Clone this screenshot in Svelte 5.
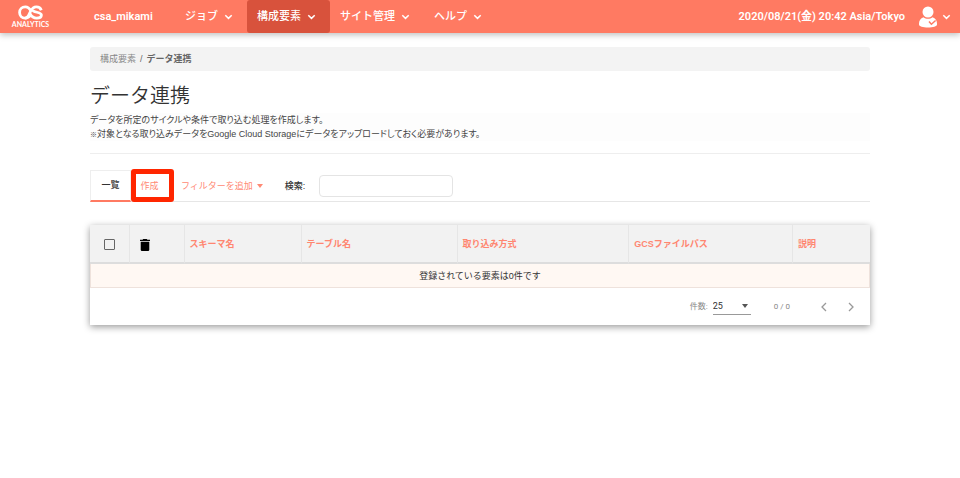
<script>
  const menus = [
    { label: 'ジョブ', active: false },
    { label: '構成要素', active: true },
    { label: 'サイト管理', active: false },
    { label: 'ヘルプ', active: false }
  ];
  const columns = ['スキーマ名', 'テーブル名', '取り込み方式', 'GCSファイルパス', '説明'];
  const widths = [5, 7, 15, 20, 22, 21, 10];
  let search = $state('');
  let pageSize = $state('25');
  let allSelected = $state(false);
</script>

{#snippet chevron()}
  <svg class="chevron" viewBox="0 0 9 6" aria-hidden="true">
    <path d="M1.3 1.2 4.5 4.4 7.7 1.2" />
  </svg>
{/snippet}

<header>
  <a class="logo" href="#top" aria-label="CS Analytics">
    <svg viewBox="0 0 25 15" aria-hidden="true">
      <path d="M23.300 5.200C22.500 3 20.700 1.900 18.300 1.900 15.400 1.900 14 3.600 12.500 6.300 10.900 9.600 10.300 13.100 7 13.100 4 13.100 1.600 10.600 1.600 7.500S4 1.900 7.300 1.900c3 0 4.300 1.600 5.700 4.200" />
      <path d="M14.700 4.800c.3 3 8.700 1.900 8.700 5.200 0 1.900-1.900 3.100-4.700 3.100-3.200 0-5.200-1.700-6.700-4.500" />
      <path d="M7 13.100c2.700 0 4.300-1.200 5.500-3.100" />
    </svg>
    <span>ANALYTICS</span>
  </a>
  <a class="account" href="#account">csa_mikami</a>
  <nav class="menus">
    {#each menus as menu}
      <button class="menu" class:active={menu.active}>{menu.label}{@render chevron()}</button>
    {/each}
  </nav>
  <time datetime="2020-08-21T20:42">2020/08/21(金) 20:42 Asia/Tokyo</time>
  <button class="user" aria-label="ユーザー">
    <svg class="person" viewBox="0 0 20 22" aria-hidden="true">
      <circle cx="10" cy="6" r="5.500" />
      <path d="M5.500 11.200C2.500 12.200 1 14.500 1 17.500v1C1 20.500 5 21.500 10 21.500s9-1 9-3v-1c0-3-1.500-5.300-4.500-6.300-2.500 2.100-6.500 2.100-9 0Z" />
      <path class="check" d="m11 15.500 2.400 2.700 4.200-3.700" />
    </svg>
    {@render chevron()}
  </button>
</header>

<main>
  <nav class="crumbs"><a href="#elements">構成要素</a><span>/</span><strong>データ連携</strong></nav>
  <h1>データ連携</h1>
  <p>データを所定のサイクルや条件で取り込む処理を作成します。<br /><small>※</small>対象となる取り込みデータをGoogle Cloud Storageにデータをアップロードしておく必要があります。</p>
  <hr />

  <div class="tools">
    <a class="tab current" href="#list">一覧</a>
    <a class="tab create" href="#create">作成</a>
    <button class="filter">フィルターを追加<span class="caret"></span></button>
    <label for="search">検索:</label>
    <input id="search" type="text" bind:value={search} />
  </div>

  <section class="card">
    <table>
      <colgroup>
        {#each widths as width}<col style="width: {width}%" />{/each}
      </colgroup>
      <thead>
        <tr>
          <th class="icon"><input type="checkbox" aria-label="すべて選択" bind:checked={allSelected} /></th>
          <th class="icon trash">
            <button aria-label="削除">
              <svg viewBox="0 0 10 12" aria-hidden="true"><path d="M3.200 0h3.600l.6.700H10V2H0V.700h2.600ZM.700 2.700h8.600V10.700Q9.300 12 8 12H2Q.700 12 .700 10.700Z" /></svg>
            </button>
          </th>
          {#each columns as column}<th>{column}</th>{/each}
        </tr>
      </thead>
      <tbody>
        <tr><td colspan="7">登録されている要素は0件です</td></tr>
      </tbody>
    </table>
    <footer>
      <label for="size">件数:</label>
      <span class="select">
        <select id="size" bind:value={pageSize}>
          <option>25</option>
          <option>50</option>
          <option>100</option>
        </select>
        <span class="caret"></span>
      </span>
      <span class="range">0 / 0</span>
      <button aria-label="前へ"><svg viewBox="0 0 6 10" aria-hidden="true"><path d="M5 1 1 5l4 4" /></svg></button>
      <button aria-label="次へ"><svg viewBox="0 0 6 10" aria-hidden="true"><path d="m1 1 4 4-4 4" /></svg></button>
    </footer>
  </section>
</main>

<style>
  :global(body) {
    background: #fff;
    color: #333;
    font: 9px/14px "Liberation Sans", "Noto Sans CJK JP", sans-serif;
  }
  * { box-sizing: border-box; }
  a { color: inherit; text-decoration: none; }
  button { border: 0; padding: 0; background: none; color: inherit; font: inherit; cursor: pointer; }

  header {
    display: flex;
    align-items: center;
    height: 33px;
    padding: 0 9px 0 11px;
    background: #ff7a62;
    color: #fff;
    font: 500 11px/16px Roboto, "Noto Sans CJK JP", sans-serif;
    box-shadow: 0 2px 6px rgb(0 0 0 / 25%);
  }
  .logo { display: flex; flex-direction: column; align-items: center; width: 39px; margin-right: 44px; }
  .logo svg { width: 25px; height: 15px; fill: none; stroke: #fff; stroke-width: 2.800; }
  .logo span { font: bold 7px/9px Lato, sans-serif; }
  .account { width: 81px; font-weight: 600; }
  .menus { display: flex; }
  .menu { display: flex; align-items: center; gap: 6px; height: 33px; padding: 0 14px 0 10px; border-radius: 3px; }
  .menu.active { background: #d8523c; }
  .chevron { width: 9px; height: 6px; fill: none; stroke: currentColor; stroke-width: 1.500; }
  time { margin-left: auto; white-space: nowrap; font-weight: 600; }
  .user { display: flex; align-items: center; gap: 4px; margin-left: 13px; }
  .person { width: 20px; height: 22px; fill: #fff; }
  .person .check { fill: none; stroke: #ff7a62; stroke-width: 1.500; }

  main { padding: 14px 90px 40px; }
  .crumbs {
    display: flex;
    gap: 4px;
    padding: 5px 10px;
    border-radius: 3px;
    background: #f3f3f3;
    color: #666;
  }
  .crumbs a { color: #888; }
  h1 { margin: 10px 0 2px; font-size: 20px; line-height: 30px; font-weight: 350; }
  p { margin: 0; background: #fdfdfd; color: #444; font-feature-settings: "palt"; }
  small { font-size: 7px; line-height: 9px; }
  hr { margin: 12px 0 16px; border: 0; border-top: 1px solid #eee; }

  .tools { display: flex; align-items: center; height: 32px; border-bottom: 1px solid #e6e6e6; }
  .tab { display: flex; align-items: center; justify-content: center; color: #ff8a75; }
  .current {
    width: 41px;
    height: 32px;
    border: 1px solid #eee;
    border-bottom: 2px solid #ff7a62;
    color: #333;
    font-weight: 500;
  }
  .create {
    width: 43px;
    height: 33px;
    border: 5px solid #ff2600;
    border-radius: 3px;
    padding-right: 6px;
  }
  .filter { display: flex; align-items: center; gap: 4px; margin-left: 7px; color: #ff8a75; }
  .caret { border: 3px solid transparent; border-top: 4px solid currentColor; border-bottom: 0; }
  .tools label { margin: 0 14px 0 22px; font-weight: 500; }
  .tools input { width: 134px; height: 22px; border: 1px solid #e4e4e4; border-radius: 4px; padding: 0 6px; font: inherit; }

  .card { margin-top: 23px; box-shadow: 0 2px 7px rgb(0 0 0 / 40%); background: #fff; }
  table { width: 100%; table-layout: fixed; border-collapse: separate; border-spacing: 0; }
  th {
    height: 39px;
    padding: 0 5px;
    border-left: 1px solid #e6e6e6;
    border-bottom: 2px solid #ddd;
    background: #f2f2f2;
    color: #ff8670;
    text-align: left;
  }
  th:first-child { border-left: 0; }
  .icon { padding: 2px 0 0 14px; }
  .trash { padding-left: 10px; }
  .icon input {
    display: block;
    width: 11px;
    height: 11px;
    margin: 0;
    appearance: none;
    border: 1px solid #666;
    border-radius: 1px;
  }
  .icon input:checked { background: #777; }
  .trash button { display: block; }
  .trash svg { display: block; width: 10px; height: 12px; fill: #000; }
  td { height: 24px; padding: 0; border: 1px solid #eee2dc; border-top: 0; background: #fff8f3; text-align: center; }

  footer { display: flex; align-items: center; justify-content: flex-end; height: 37px; padding-right: 16px; color: #888; font-family: Roboto, "Noto Sans CJK JP", sans-serif; font-size: 8px; }
  .select { display: flex; align-items: center; width: 38px; height: 16px; margin: 0 23px 0 5px; border-bottom: 1px solid #999; position: relative; color: #555; }
  select { width: 100%; appearance: none; border: 0; padding: 0; background: none; color: #333; font: 9px/14px Roboto, sans-serif; }
  .select .caret { position: absolute; right: 3px; pointer-events: none; }
  .range { margin-right: 31px; }
  footer button + button { margin-left: 21px; }
  footer svg { display: block; width: 6px; height: 10px; fill: none; stroke: #999; stroke-width: 1.300; }
</style>
